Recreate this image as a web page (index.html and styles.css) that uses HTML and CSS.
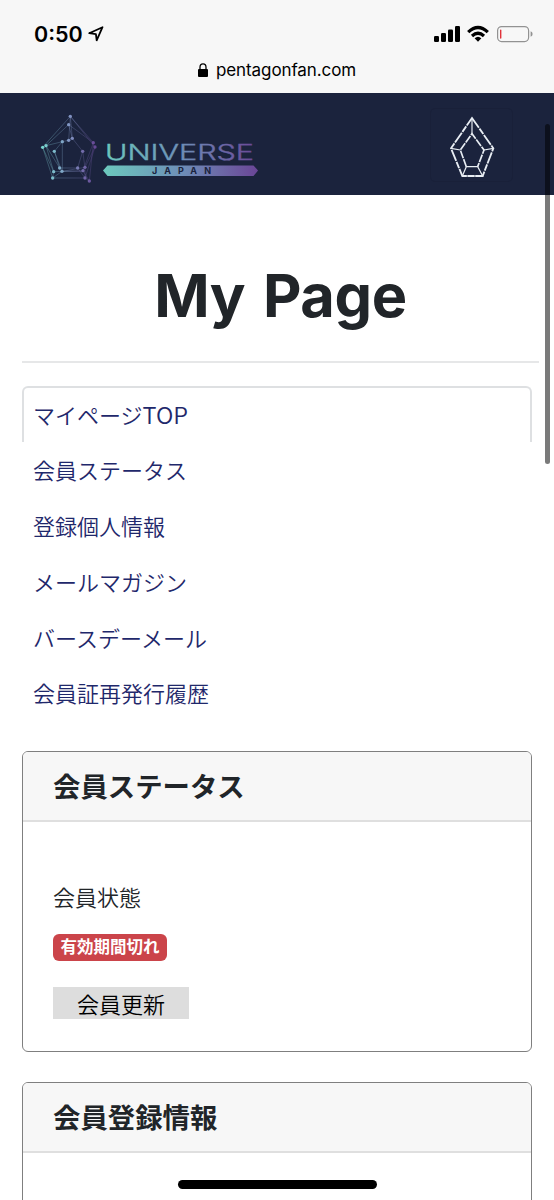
FILE: index.html
```html
<!DOCTYPE html>
<html lang="ja">
<head>
<meta charset="utf-8">
<title>My Page</title>
<link rel="stylesheet" href="styles.css">
</head>
<body>
<div class="screen">
  <header class="browser">
    <div class="status">
      <div class="clock">0:50
        <svg class="location" viewBox="0 0 16 16"><path d="M1.2 7.2 14.500 1.2 8.700 14.300 7.9 8.1Z" fill="none" stroke="#000" stroke-width="1.8" stroke-linejoin="round"/></svg>
      </div>
      <svg class="indicators" viewBox="434 24 100 20">
        <rect x="434" y="36" width="5" height="6" rx="1.2"/><rect x="441" y="33" width="5" height="9" rx="1.2"/><rect x="448" y="29.5" width="5" height="12.5" rx="1.2"/><rect x="455" y="26" width="5" height="16" rx="1.2"/>
        <g fill="none" stroke="#000" stroke-width="3.2"><path d="M468.2 32.2Q478 22.8 487.8 32.2"/><path d="M472 36Q478 30.4 484 36"/></g>
        <path d="M474.6 38.3Q478 35.3 481.4 38.3L478 41.7Z"/>
        <rect x="497.6" y="26.6" width="31" height="15" rx="4" fill="none" stroke="#929292" stroke-width="1.2"/>
        <path d="M530.6 31.2Q532.6 32 532.6 34T530.6 36.8Z" fill="#929292"/>
        <rect x="500" y="29.4" width="1.4" height="9.4" rx=".7" fill="#e0323a"/>
      </svg>
    </div>
    <div class="address">
      <svg class="lock" viewBox="0 0 10 14"><rect x="0" y="6" width="10" height="8" rx="1"/><path d="M2 7V4.2Q2 .9 5 .9T8 4.2V7" fill="none" stroke="#000" stroke-width="1.3"/></svg>
      <span>pentagonfan.com</span>
    </div>
  </header>

  <nav class="navbar">
    <svg class="logo" viewBox="30 100 240 90">
      <defs>
        <linearGradient id="brand" gradientUnits="userSpaceOnUse" x1="103" y1="0" x2="258" y2="0"><stop offset="0" stop-color="#6cc9bd"/><stop offset=".5" stop-color="#6e8fb8"/><stop offset="1" stop-color="#6a4596"/></linearGradient>
        <linearGradient id="star" gradientUnits="userSpaceOnUse" x1="38" y1="0" x2="195" y2="0"><stop offset="0" stop-color="#78d5cf"/><stop offset=".5" stop-color="#8296c4"/><stop offset="1" stop-color="#664795"/></linearGradient>
      </defs>
      <g transform="translate(30 100) scale(.33333)">
        <path fill="none" stroke="url(#star)" stroke-width="1.7" opacity=".55" d="M121 49 38 142 68 234H165L195 141ZM116 74 48 137 71 215 159 212 190 128ZM121 49 116 121M121 49 127 115M116 74 127 115M97 125 116 121 127 115 158 154 143 204H89L73 154 97 125V214L165 202 158 154M48 137 97 125M48 137 89 204M38 142 71 215 68 234M73 154 96 214H159M121 49 190 128 178 243 165 234 143 204M165 202 165 234M195 141 165 202M96 214 68 234M178 243 159 212"/>
        <g fill="url(#star)"><circle cx="121" cy="49" r="5"/><circle cx="116" cy="74" r="5"/><circle cx="116" cy="121" r="5"/><circle cx="127" cy="115" r="5"/><circle cx="97" cy="125" r="5"/><circle cx="48" cy="137" r="5"/><circle cx="38" cy="142" r="5"/><circle cx="73" cy="154" r="5"/><circle cx="190" cy="128" r="5"/><circle cx="195" cy="141" r="5"/><circle cx="158" cy="154" r="5"/><circle cx="89" cy="204" r="5"/><circle cx="96" cy="214" r="5"/><circle cx="71" cy="215" r="5"/><circle cx="68" cy="234" r="5"/><circle cx="143" cy="204" r="5"/><circle cx="165" cy="202" r="5"/><circle cx="159" cy="212" r="5"/><circle cx="165" cy="234" r="5"/><circle cx="178" cy="243" r="5"/></g>
      </g>
      <text class="wordmark" x="105" y="159.5" textLength="149" lengthAdjust="spacingAndGlyphs" fill="url(#brand)">UNIVERSE</text>
      <path d="M103 170.5 107.5 165.5H253.500L258 170.500 253.500 176H107.500Z" fill="url(#brand)"/>
      <text class="region" x="152" y="174" textLength="59">JAPAN</text>
    </svg>
    <div class="menu-button">
      <svg class="gem" viewBox="87 60 138 186" fill="none" stroke="#e8edf3">
        <path stroke-width="5.500" stroke-dasharray="36 3 20 3" d="M156 66 220 157 188 240H127L93 157Z"/>
        <path stroke-width="5" stroke-dasharray="24 3" d="M139 212 121 162 156 113 192 162 173 212"/>
        <path stroke-width="3.500" d="M156 66V113M220 157 192 162M93 157 121 162M127 240 139 212H173L188 240H127"/>
      </svg>
    </div>
  </nav>

  <main class="content">
    <h1 class="title"><span>My Page</span></h1>
    <ul class="tabs">
      <li class="tab active">マイページ<span class="latin">TOP</span></li>
      <li class="tab">会員ステータス</li>
      <li class="tab">登録個人情報</li>
      <li class="tab">メールマガジン</li>
      <li class="tab">バースデーメール</li>
      <li class="tab">会員証再発行履歴</li>
    </ul>
    <section class="card">
      <h2 class="card-header">会員ステータス</h2>
      <div class="card-body">
        <p class="label">会員状態</p>
        <span class="badge">有効期間切れ</span>
        <button class="renew">会員更新</button>
      </div>
    </section>
    <section class="card">
      <h2 class="card-header">会員登録情報</h2>
      <div class="card-body"></div>
    </section>
  </main>
  <div class="scrollbar"></div>
  <div class="home-indicator"></div>
</div>
</body>
</html>
```
FILE: styles.css
```css
* { box-sizing: border-box; }
body {
  margin: 0;
  background: #fff;
  color: #212529;
  font-family: Inter, "Noto Sans CJK JP", sans-serif;
}
.screen { position: relative; width: 554px; height: 1200px; overflow: hidden; }
.browser { height: 93px; background: #f7f7f7; color: #000; padding: 20px 20px 0 34px; }
.status { display: flex; justify-content: space-between; align-items: center; height: 28px; }
.clock { display: flex; align-items: center; gap: 5px; font-size: 21.500px; font-weight: 600; }
.location { width: 16px; height: 16px; }
.indicators { width: 100px; height: 20px; }
.address { display: flex; align-items: center; gap: 8px; height: 26px; margin-top: 9px; padding-left: 164px; font-size: 17px; letter-spacing: -.1px; }
.lock { width: 10px; height: 14px; }
.navbar { display: flex; justify-content: space-between; align-items: flex-start; height: 102px; padding: 7px 41px 0 30px; background: #1b233d; }
.logo { width: 240px; height: 90px; }
.wordmark { font: 300 21.500px Inter, sans-serif; stroke: url(#brand); stroke-width: .4px; }
.region { font: 700 9px Inter, sans-serif; fill: #1b233d; }
.menu-button { display: flex; justify-content: center; width: 83px; height: 74px; margin-top: 8px; padding-top: 7px; border: 1px solid #192039; border-radius: 5px; }
.gem { width: 46px; height: 62px; }
.content { padding: 0 22px; }
.title { display: flex; justify-content: center; height: 168px; margin: 0 -7px 23px 0; padding-top: 62px; border-bottom: 2px solid #e6e7e8; font-size: 59.500px; line-height: 76px; font-weight: 700; letter-spacing: -.4px; word-spacing: 4px; }
.tabs { margin: 0; padding: 0; list-style: none; height: 365px; }
.tab { height: 55.900px; padding: 0 11px; line-height: 55px; font-family: "Noto Sans CJK JP", sans-serif; font-size: 22px; font-weight: 350; color: #1f286b; }
.active { border: 2px solid #dee0e2; border-bottom: 0; border-radius: 6px 6px 0 0; padding: 0 9px; line-height: 52px; }
.latin { font-size: 23.500px; line-height: 1; }
.card { height: 301px; margin-bottom: 30px; border: 1.500px solid #7f7f7f; border-radius: 6px; overflow: hidden; }
.card-header { height: 70px; margin: 0; padding-left: 30px; background: #f7f7f7; border-bottom: 2px solid #dfdfdf; font: 700 27.400px/66px "Noto Sans CJK JP", sans-serif; }
.card-body { display: flex; flex-direction: column; align-items: flex-start; padding: 58px 30px 0; font-family: "Noto Sans CJK JP", sans-serif; }
.label { margin: 0; font-size: 22px; line-height: 32px; font-weight: 350; }
.badge { width: 114px; height: 27px; margin-top: 22px; border-radius: 6px; background: #cb444a; color: #fff; font-size: 16.500px; font-weight: 700; line-height: 25px; text-align: center; }
.renew { width: 136px; height: 32px; margin-top: 26px; padding: 0; border: 0; background: #ddd; color: #000; font: 350 22px/30px "Noto Sans CJK JP", sans-serif; }
.scrollbar { position: absolute; top: 124px; right: 4px; width: 5px; height: 340px; border-radius: 3px; background: rgba(0, 0, 0, .52); }
.home-indicator { position: absolute; left: 178px; top: 1180px; width: 199px; height: 9px; border-radius: 5px; background: #000; }
```
